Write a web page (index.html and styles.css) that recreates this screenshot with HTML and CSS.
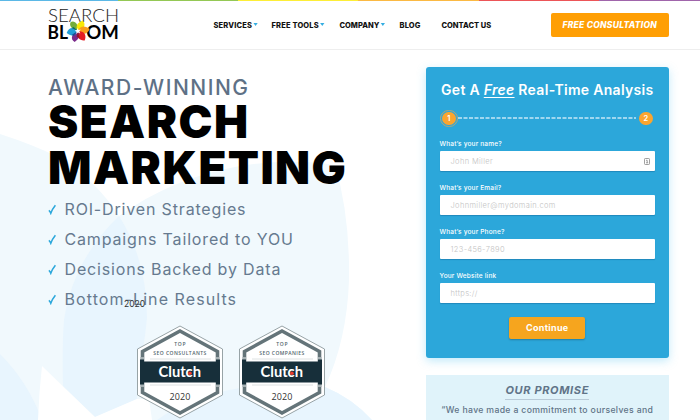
FILE: index.html
```html
<!DOCTYPE html>
<html lang="en">
<head>
<meta charset="utf-8">
<title>Search Bloom</title>
<link rel="stylesheet" href="styles.css">
</head>
<body>
<div class="stripe"><i class="s1"></i><i class="s2"></i><i class="s3"></i><i class="s4"></i><i class="s5"></i><i class="s6"></i></div>
<header class="header">
  <svg class="logo" viewBox="0 0 72 36" width="72" height="36">
    <text class="logo-thin" x="0" y="16.2" textLength="71" lengthAdjust="spacingAndGlyphs">SEARCH</text>
    <text class="logo-bold" x="-.5" y="33" textLength="20.500" lengthAdjust="spacingAndGlyphs">BL</text>
    <text class="logo-bold" x="38.3" y="33" textLength="32.6" lengthAdjust="spacingAndGlyphs">OM</text>
    <g transform="translate(29.7 25)">
      <path fill="#74ad3b" d="M0 0C-6-2-9-5-7-9C-3-11 1-7 0 0Z"/>
      <path fill="#f8e908" d="M0 0C-3-6 1-9 5-10.500C9-6 6-2 0 0Z"/>
      <path fill="#f99d1c" d="M0 0C3-6 8-5 12-2C10 3 5 5 0 0Z"/>
      <path fill="#e41b23" d="M0 0C7 0 9 4 7 9.500C2 10-2 6 0 0Z"/>
      <path fill="#7b2b8b" d="M0 0C3 5 1 8-3 11C-8 8-6 3 0 0Z"/>
      <path fill="#239fd8" d="M0 0C-3 6-7 5-11 2C-9-3-5-5 0 0Z"/>
      <path fill="#0d6b62" d="M0 0L-6-3L-4-4Z"/><path fill="#9c1520" d="M0 0L-1 6L2 7Z"/><path fill="#214a8c" d="M0 0L-6 4L-4 5Z"/>
      <path fill="#fff" d="M0-3L.8-1L3-1.4L1.6.4L2.6 2.4L.3 1.6L-1.4 3L-1.2.8L-3-.4L-.9-.9Z"/>
    </g>
  </svg>
  <nav class="nav">
    <a class="n1">SERVICES<b></b></a><a class="n2">FREE TOOLS<b></b></a><a class="n3">COMPANY<b></b></a><a class="n4">BLOG</a><a class="n5">CONTACT US</a>
  </nav>
  <a class="cta">FREE CONSULTATION</a>
</header>
<main class="hero">
  <svg class="petals" viewBox="0 50 430 370" width="430" height="370">
    <path fill="#f1f9fd" d="M0 134Q34 145 58 157Q96 180 119 216Q172 178 240 166Q290 158 335 165Q350 215 349 280Q347 340 325 387Q352 398 372 420H0Z"/>
    <path fill="#e8f5fe" d="M119 216Q147 260 147 318Q144 350 137 378V399L95 417L63 387Q62 345 64 320Q73 260 119 216Z"/>
    <path fill="#e8f5fe" d="M0 354Q28 382 42 420H0Z"/>
    <path fill="#e8f5fe" d="M157 420Q190 396 240 388Q285 382 325 387Q352 398 372 420Z"/>
    <path fill="#fff" d="M42 366L95 417L137 399H149L152 420H38Q39 392 42 366Z"/>
  </svg>
  <section class="pitch">
    <h1><span>AWARD-WINNING</span>SEARCH<br>MARKETING</h1>
    <ul>
      <li><svg class="tick" viewBox="0 0 9 11"><path d="M.8 6.3Q2 7 2.8 9.2Q4.3 5 7.4 1.2"/></svg>ROI-Driven Strategies</li>
      <li><svg class="tick" viewBox="0 0 9 11"><path d="M.8 6.3Q2 7 2.8 9.2Q4.3 5 7.4 1.2"/></svg>Campaigns Tailored to YOU</li>
      <li><svg class="tick" viewBox="0 0 9 11"><path d="M.8 6.3Q2 7 2.8 9.2Q4.3 5 7.4 1.2"/></svg>Decisions Backed by Data</li>
      <li class="wide"><svg class="tick" viewBox="0 0 9 11"><path d="M.8 6.3Q2 7 2.8 9.2Q4.3 5 7.4 1.2"/></svg>Bottom-Line Results<em class="stray">2020</em></li>
    </ul>
    <div class="badges">
      <svg viewBox="0 0 88 94" width="88" height="94">
        <path class="rim" d="M44 1L86.5 24V70L44 93L1.500 70V24Z"/>
        <path class="ring" d="M44 6L81.500 26.500V67.500L44 88L6.500 67.500V26.500Z"/>
        <path class="side" d="M4.500 32H8V62H4.500ZM80 32H83.500V62H80Z"/>
        <path class="band" d="M4 34.500H8V36.500H80V34.500H84V59.500H80V57.500H8V59.500H4Z"/>
        <path class="rule" d="M14 34H75M14 60H75"/>
        <text class="cap" x="38.200" y="20.500" textLength="11.500">TOP</text>
        <text class="cap" x="17.300" y="29.800" textLength="53">SEO CONSULTANTS</text>
        <text class="clutch" x="22.500" y="52" textLength="42.500" lengthAdjust="spacingAndGlyphs">Clutch</text><circle cx="54" cy="48.300" r="1.800" fill="#ef3a2d"/>
        <text class="year" x="33.500" y="74.500" textLength="21">2020</text>
      </svg>
      <svg viewBox="0 0 88 94" width="88" height="94">
        <path class="rim" d="M44 1L86.5 24V70L44 93L1.500 70V24Z"/>
        <path class="ring" d="M44 6L81.500 26.500V67.500L44 88L6.500 67.500V26.500Z"/>
        <path class="side" d="M4.500 32H8V62H4.500ZM80 32H83.500V62H80Z"/>
        <path class="band" d="M4 34.500H8V36.500H80V34.500H84V59.500H80V57.500H8V59.500H4Z"/>
        <path class="rule" d="M14 34H75M14 60H75"/>
        <text class="cap" x="38.200" y="20.500" textLength="11.500">TOP</text>
        <text class="cap" x="21.300" y="29.800" textLength="45">SEO COMPANIES</text>
        <text class="clutch" x="22.500" y="52" textLength="42.500" lengthAdjust="spacingAndGlyphs">Clutch</text><circle cx="54" cy="48.300" r="1.800" fill="#ef3a2d"/>
        <text class="year" x="33.500" y="74.500" textLength="21">2020</text>
      </svg>
    </div>
  </section>
  <aside class="side-col">
    <form class="card">
      <h2>Get A <em>Free</em> Real-Time Analysis</h2>
      <div class="steps"><span class="step on">1</span><svg class="dash" width="178" height="2"><path d="M0 1H178"/></svg><span class="step">2</span></div>
      <label>What’s your name?</label>
      <div class="field">John Miller<svg class="key" viewBox="0 0 6 7" width="6" height="7"><rect x=".5" y=".5" width="5" height="6" rx=".8"/><path d="M2 2.300H3.200V4.800M2 4.800H4.200"/></svg></div>
      <label>What’s your Email?</label>
      <div class="field">Johnmiller@mydomain.com</div>
      <label>What’s your Phone?</label>
      <div class="field">123-456-7890</div>
      <label>Your Website link</label>
      <div class="field">https://</div>
      <div class="go">Continue</div>
    </form>
    <section class="promise">
      <h3>OUR PROMISE</h3>
      <p>“We have made a commitment to ourselves and</p>
    </section>
  </aside>
</main>
</body>
</html>
```
FILE: styles.css
```css
* { box-sizing: border-box; }
body { margin: 0; width: 700px; height: 420px; overflow: hidden; background: #fff; font-family: Inter, sans-serif; }
h1, h2, h3, p, ul { margin: 0; padding: 0; }

.stripe { display: flex; height: 1px; }
.s1 { width: 118px; background: #5bb8e6; }
.s2 { width: 120px; background: #94c855; }
.s3 { width: 120px; background: #fdee37; }
.s4 { width: 121px; background: #fbb943; }
.s5 { width: 120px; background: #ec5558; }
.s6 { width: 101px; background: #a065ab; }

.header { display: flex; align-items: flex-start; height: 49px; padding: 0 31px 0 48px; border-bottom: 1px solid #eee; }
.logo { margin-top: 5px; overflow: visible; }
.logo-thin { font: 300 18.500px Lato, sans-serif; fill: #222; }
.logo-bold { font: 700 19.500px Lato, sans-serif; fill: #000; }
.nav { display: flex; flex: 1; padding: 18.500px 0 0 93.500px; font-size: 7.500px; font-weight: 800; line-height: 12px; letter-spacing: .15px; color: #111; white-space: nowrap; }
.nav a { display: flex; }
.nav b { margin: 3px 0 0 1px; width: 5px; height: 3.500px; background: #35aee2; clip-path: polygon(0 0, 100% 0, 50% 100%); }
.n1 { width: 58px; }
.n2 { width: 68px; }
.n3 { width: 60px; }
.n4 { width: 42px; }
.nav .n3, .nav .n5 { letter-spacing: 0; }
.cta { width: 118.500px; height: 23.500px; margin-top: 12px; border-radius: 2px; background: #ff9f04; color: #fff; font-size: 8.500px; font-weight: 800; font-style: italic; line-height: 24px; letter-spacing: .26px; text-align: center; white-space: nowrap; }

.hero { position: relative; display: flex; justify-content: space-between; height: 371px; padding: 0 31px 0 48px; }
.petals { position: absolute; left: 0; top: 0; z-index: -1; }
.pitch { width: 320px; padding-top: 26px; }
h1 { font-size: 45.500px; font-weight: 900; line-height: 46px; letter-spacing: 1.450px; color: #000; white-space: nowrap; }
h1 span { display: block; font-size: 21px; font-weight: 500; line-height: 23px; letter-spacing: 1.530px; color: #5e7186; }
ul { list-style: none; padding-top: 3.400px; }
li { position: relative; display: flex; align-items: center; height: 30px; font-size: 16px; letter-spacing: .84px; color: #667a8f; white-space: nowrap; }
.wide { letter-spacing: 1.080px; }
.tick { width: 9px; height: 11px; margin-right: 7.500px; }
.tick path { fill: none; stroke: #2aa7db; stroke-width: 1.500; }
.stray { position: absolute; left: 76px; top: 14.500px; font-size: 8.500px; font-style: normal; letter-spacing: 0; color: #333; }
.badges { display: flex; gap: 14px; padding: 11px 0 0 88px; }
.rim { fill: #fff; stroke: #8c989c; stroke-width: .9; }
.ring { fill: #fff; stroke: #647479; stroke-width: 3.600; }
.side { fill: #a5b0b3; }
.band { fill: #172f3a; }
.rule { stroke: #d5dadb; stroke-width: .8; }
.cap { font: 600 5px "Open Sans", sans-serif; fill: #52656d; }
.clutch { font: 700 15px Lato, sans-serif; fill: #fff; }
.year { font: 400 9px "Open Sans", sans-serif; fill: #333; }

.side-col { width: 243.500px; padding-top: 17.400px; }
.card { height: 290.500px; padding: 12px 14px 0; border-radius: 3px; background: #2ca7da; box-shadow: 0 3px 10px rgba(80, 195, 240, .35); color: #fff; }
h2 { font-size: 14px; font-weight: 600; line-height: 22px; letter-spacing: .3px; text-align: center; white-space: nowrap; }
h2 em { text-decoration: underline; text-decoration-thickness: 1px; text-underline-offset: 2px; }
.steps { display: flex; align-items: center; justify-content: space-between; height: 18px; margin-top: 8px; padding: 0 2.500px; }
.step { width: 13.500px; height: 13.500px; border-radius: 50%; background: #fba52f; font-size: 7.500px; font-weight: 600; line-height: 13.500px; text-align: center; }
.on { outline: 1px solid #b1a778; outline-offset: 1.500px; }
.dash path { stroke: #c5e7f6; stroke-width: 1.500; stroke-dasharray: 4 1.500; }
label { display: block; height: 11.700px; margin-top: 11.800px; font-size: 6.500px; font-weight: 500; line-height: 10px; letter-spacing: .18px; }
.field { display: flex; align-items: center; justify-content: space-between; height: 20.500px; padding: 0 5px 0 11px; border-radius: 1px; background: #fff; box-shadow: 0 1px 1px rgba(0, 70, 120, .3); color: #c3c3c3; font-size: 7.500px; font-weight: 300; letter-spacing: .35px; }
.key { fill: none; stroke: #888; stroke-width: .8; }
.go { width: 76px; height: 21.500px; margin: 14px auto 0; border-radius: 2px; background: #f6a51e; box-shadow: 0 1px 2px rgba(0, 0, 0, .25); font-size: 9px; font-weight: 700; line-height: 21.500px; letter-spacing: .28px; text-align: center; }
.promise { height: 60px; margin-top: 17px; background: #e0f3fa; color: #607488; text-align: center; white-space: nowrap; }
h3 { display: inline-block; height: 25px; padding-top: 8px; border-bottom: 1.500px solid #b9cbd8; font-size: 11px; font-style: italic; font-weight: 700; line-height: 15px; letter-spacing: .65px; vertical-align: top; }
.promise p { margin-top: 3.500px; font-size: 8.700px; font-weight: 500; line-height: 14px; letter-spacing: .33px; }
```
